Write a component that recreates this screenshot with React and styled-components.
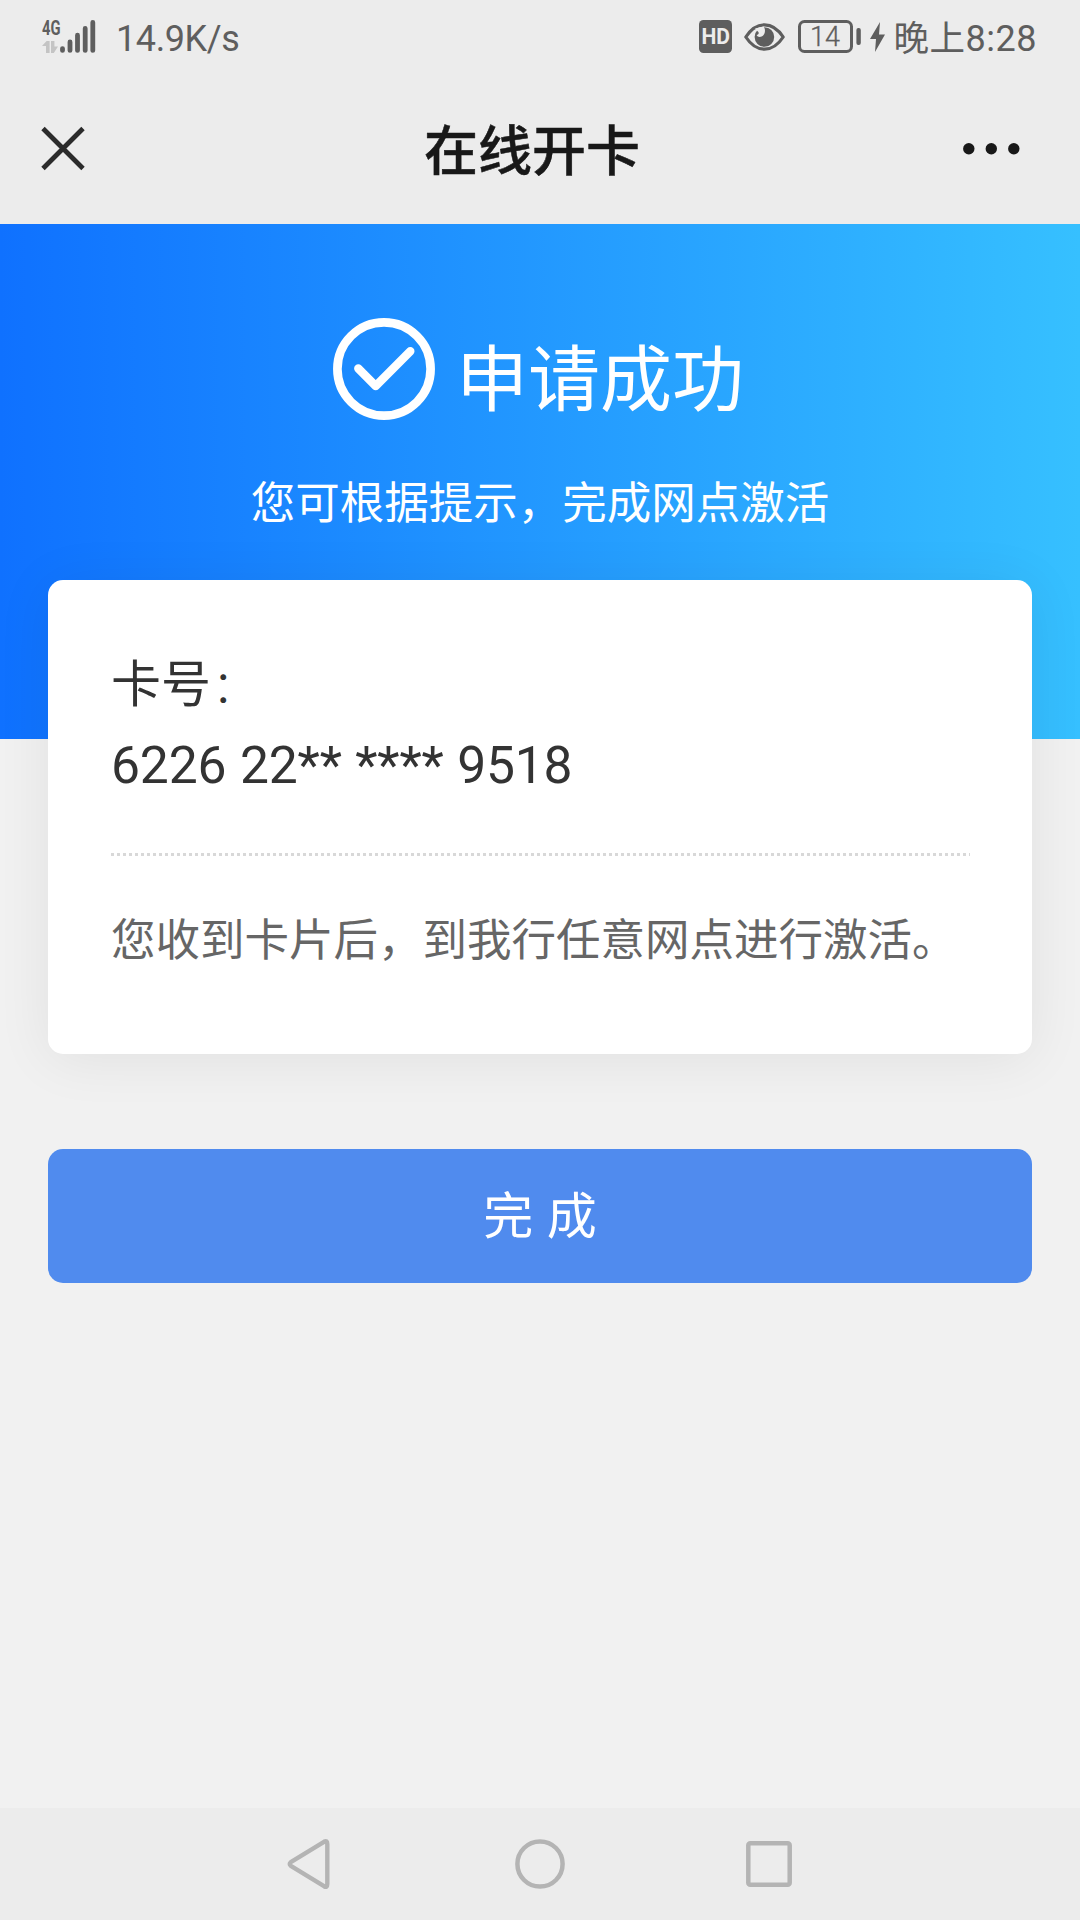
import React from "react";
import styled, { createGlobalStyle } from "styled-components";

const GlobalStyle = createGlobalStyle`
  html, body { margin: 0; padding: 0; background: #f1f1f1; }
  *, *::before, *::after { box-sizing: border-box; }
  h1, h2, p, dl, dt, dd { margin: 0; font-weight: 400; }
  svg { display: block; flex: none; }
  button { font: inherit; border: 0; padding: 0; background: none; }
`;

const Screen = styled.div`
  width: 1080px;
  height: 1920px;
  display: flex;
  flex-direction: column;
  overflow: hidden;
  background: #f1f1f1;
  font-family: Roboto, "Noto Sans CJK SC", sans-serif;
`;

const StatusBar = styled.header`
  height: 73px;
  flex: none;
  display: flex;
  align-items: center;
  justify-content: space-between;
  padding: 0 43px 0 40px;
  background: #ececec;
  color: #5e5e5e;
`;

const StatusGroup = styled.div`
  display: flex;
  align-items: center;
  height: 73px;
  gap: ${(p) => p.$gap}px;
`;

const StatusText = styled.span`
  font-size: 36px;
  line-height: 72px;
  padding-top: 4px;
  letter-spacing: ${(p) => p.$tracking || 0}px;
  white-space: nowrap;
`;

const TimePeriod = styled.span`
  font-size: 35.5px;
`;

const TitleBar = styled.div`
  height: 151px;
  flex: none;
  display: grid;
  grid-template-columns: 1fr auto 1fr;
  align-items: center;
  padding: 0 59px 0 40px;
  background: #ececec;
`;

const PageTitle = styled.h1`
  padding: 9px 0 0 3px;
  font-size: 54px;
  line-height: 80px;
  font-weight: 500;
  color: #181818;
  -webkit-text-stroke: 0.5px #181818;
`;

const IconButton = styled.button`
  display: flex;
  justify-self: ${(p) => p.$side};
`;

const Content = styled.main`
  flex: 1;
  display: flex;
  flex-direction: column;
`;

const Banner = styled.section`
  height: 515px;
  flex: none;
  display: flex;
  flex-direction: column;
  align-items: center;
  padding-top: 93px;
  color: #fff;
  background: linear-gradient(90deg, #0f71ff 0%, #36c0ff 100%);
`;

const ResultRow = styled.div`
  height: 104px;
  display: flex;
  align-items: center;
  gap: 21px;
  padding-right: 3px;
`;

const ResultTitle = styled.h2`
  font-size: 72px;
  line-height: 104px;
  padding-top: 23px;
`;

const ResultHint = styled.p`
  margin-top: 50px;
  font-size: 44.5px;
  line-height: 66px;
`;

const Card = styled.section`
  position: relative;
  height: 474px;
  margin: -159px 48px 0;
  padding: 67px 62px 0 63px;
  border-radius: 15px;
  background: #fff;
  box-shadow: 0 5px 56px rgba(0, 0, 0, 0.07);
`;

const CardInfo = styled.dl`
  height: 206px;
  color: #333;
`;

const CardLabel = styled.dt`
  display: flex;
  height: 74px;
  padding-top: 1px;
  font-size: 50px;
  line-height: 74px;
`;

const LabelColon = styled.span`
  padding: 3px 0 0 1px;
  font-size: 45px;
  font-weight: 300;
`;

const CardNumber = styled.dd`
  margin-top: 8px;
  font-size: 51.6px;
  line-height: 74px;
  letter-spacing: -0.17px;
  word-spacing: 1px;
  white-space: nowrap;
`;

const Divider = styled.div`
  height: 3px;
  background: repeating-linear-gradient(90deg, #d8d8d8 0 3px, transparent 3px 6px);
`;

const CardNote = styled.p`
  margin-top: 52px;
  font-size: 44.5px;
  line-height: 66px;
  color: #666;
  white-space: nowrap;
`;

const DoneButton = styled.button`
  height: 134px;
  margin: 95px 48px 0;
  padding-top: 1px;
  border-radius: 15px;
  background: #508bee;
  color: #fff;
  font-size: 50px;
  line-height: 132px;
  word-spacing: 1px;
`;

const NavBar = styled.nav`
  height: 112px;
  flex: none;
  display: grid;
  grid-template-columns: 280px 1fr 280px;
  align-items: center;
  padding: 0 171px;
  background: #ececec;
`;

const NavItem = styled.button`
  display: flex;
  justify-content: center;
`;

const SignalIcon = () => (
  <svg width="56" height="52" viewBox="0 -8 56 52" fill="currentColor">
    <text x="2" y="15.5" fontFamily="Roboto, sans-serif" fontSize="21" fontWeight="700" textLength="18.5" lengthAdjust="spacingAndGlyphs">4G</text>
    <g fill="#c4c4c4">
      <path d="M2 27 L6.6 22 H9.6 V34 H6 V27Z" />
      <path d="M11 22 H14.4 V27.4 H18 L13.8 34 H11Z" />
    </g>
    <g stroke="currentColor" strokeWidth="4.8" strokeLinecap="round">
      <path d="M22.5 29.6V31.4M30 23V31.4M37.5 16.2V31.4M45.2 9.4V31.4M52.8 3.4V31.4" />
    </g>
  </svg>
);

const HdIcon = () => (
  <svg width="33" height="33" viewBox="0 0 33 33">
    <rect width="33" height="33" rx="4.5" fill="currentColor" />
    <text x="2.4" y="24" fontFamily="Roboto, sans-serif" fontSize="21.5" fontWeight="700" fill="#ececec" textLength="28.6" lengthAdjust="spacingAndGlyphs">HD</text>
  </svg>
);

const EyeIcon = () => (
  <svg width="41" height="28" viewBox="0 0 41 28" fill="none">
    <path d="M1.8 14 C7 6 13 1.8 20.5 1.8 S34 6 39.2 14 C34 22 28 26.2 20.5 26.2 S7 22 1.8 14Z" stroke="currentColor" strokeWidth="3.2" strokeLinejoin="round" />
    <circle cx="20.4" cy="14" r="9.8" fill="currentColor" />
    <path d="M11 5.5 L19.6 3.6 C21.6 6 21.3 10 19.4 12.2 C17.2 14.6 13.6 14.4 12.6 12 C15 11.6 15.4 9.4 13.6 8.2Z" fill="#ececec" />
  </svg>
);

const BatteryIcon = () => (
  <svg width="63" height="33" viewBox="0 0 63 33">
    <rect x="1.5" y="1.5" width="52" height="30" rx="5" fill="none" stroke="currentColor" strokeWidth="3" />
    <rect x="58.4" y="8" width="4.4" height="17" rx="2" fill="currentColor" />
    <text x="12" y="26.3" fontFamily="Roboto, sans-serif" fontSize="27" fill="currentColor" fontWeight="300" stroke="currentColor" strokeWidth="0.3">14</text>
  </svg>
);

const BoltIcon = () => (
  <svg width="15" height="30" viewBox="0 0 15 30" fill="currentColor">
    <path d="M10 0 L0 17 H6 L5 30 L15 12.5 H9Z" />
  </svg>
);

const StatusIcons = styled.div`
  display: flex;
  align-items: center;
  gap: 12.5px;
`;

const ChargeGroup = styled.div`
  display: flex;
  align-items: center;
  gap: 9px;
`;

const CloseIcon = () => (
  <svg width="46" height="46" viewBox="0 0 46 46" fill="none">
    <path d="M3 2.5 L43 42.5 M43 2.5 L3 42.5" stroke="#2b2b2b" strokeWidth="4.8" />
  </svg>
);

const MoreIcon = () => (
  <svg width="58" height="12" viewBox="0 0 58 12" fill="#181818">
    <circle cx="5.8" cy="5.8" r="5.7" />
    <circle cx="28.3" cy="5.8" r="5.7" />
    <circle cx="50.8" cy="5.8" r="5.7" />
  </svg>
);

const SuccessIcon = () => (
  <svg width="102" height="102" viewBox="0 0 102 102" fill="none" stroke="#fff">
    <circle cx="51" cy="51" r="46.6" strokeWidth="8.7" />
    <path d="M25.3 50.5 L42.7 68 L77.3 33.3" strokeWidth="8.4" strokeLinecap="round" strokeLinejoin="round" />
  </svg>
);

const BackIcon = () => (
  <svg width="48" height="58" viewBox="0 -3 48 58" fill="none" stroke="#b4b4b4" strokeWidth="4.4" strokeLinejoin="round">
    <path d="M3.8 24.2 Q1.6 26 3.8 27.8 L37 48.2 Q40.3 50 40.3 46 V6 Q40.3 2 37 3.8 Z" />
  </svg>
);

const HomeIcon = () => (
  <svg width="50" height="50" viewBox="0 0 50 50" fill="none" stroke="#b4b4b4">
    <circle cx="25" cy="25" r="22.6" strokeWidth="4.5" />
  </svg>
);

const RecentIcon = () => (
  <svg width="46" height="46" viewBox="0 0 46 46" fill="none" stroke="#b4b4b4">
    <rect x="2.3" y="2.3" width="41.4" height="41.4" rx="2" strokeWidth="4.5" />
  </svg>
);

export default function App() {
  return (
    <Screen>
      <GlobalStyle />
      <StatusBar>
        <StatusGroup $gap={20}>
          <SignalIcon />
          <StatusText $tracking={-0.4}>14.9K/s</StatusText>
        </StatusGroup>
        <StatusGroup $gap={9}>
          <StatusIcons>
            <HdIcon />
            <EyeIcon />
            <ChargeGroup>
              <BatteryIcon />
              <BoltIcon />
            </ChargeGroup>
          </StatusIcons>
          <StatusText $tracking={0.5}>
            <TimePeriod>晚上</TimePeriod>8:28
          </StatusText>
        </StatusGroup>
      </StatusBar>
      <TitleBar>
        <IconButton $side="start" aria-label="关闭">
          <CloseIcon />
        </IconButton>
        <PageTitle>在线开卡</PageTitle>
        <IconButton $side="end" aria-label="更多">
          <MoreIcon />
        </IconButton>
      </TitleBar>
      <Content>
        <Banner>
          <ResultRow>
            <SuccessIcon />
            <ResultTitle>申请成功</ResultTitle>
          </ResultRow>
          <ResultHint>您可根据提示，完成网点激活</ResultHint>
        </Banner>
        <Card>
          <CardInfo>
            <CardLabel>
              卡号<LabelColon>：</LabelColon>
            </CardLabel>
            <CardNumber>6226 22** **** 9518</CardNumber>
          </CardInfo>
          <Divider />
          <CardNote>您收到卡片后，到我行任意网点进行激活。</CardNote>
        </Card>
        <DoneButton>完 成</DoneButton>
      </Content>
      <NavBar>
        <NavItem aria-label="返回">
          <BackIcon />
        </NavItem>
        <NavItem aria-label="主页">
          <HomeIcon />
        </NavItem>
        <NavItem aria-label="最近任务">
          <RecentIcon />
        </NavItem>
      </NavBar>
    </Screen>
  );
}
